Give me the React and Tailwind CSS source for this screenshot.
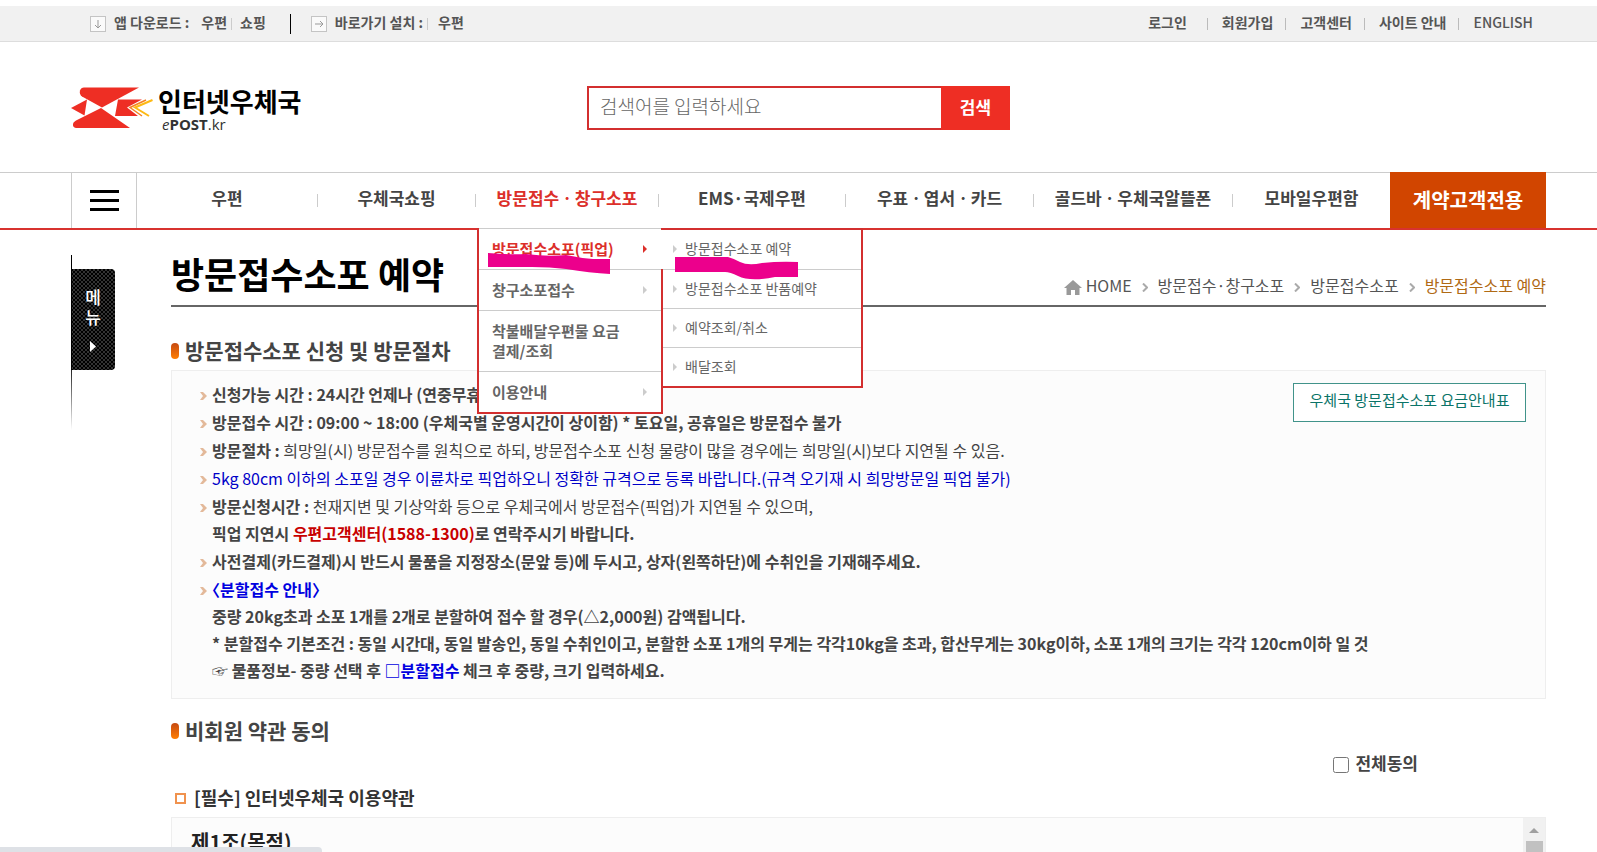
import React from 'react'
import clsx from 'clsx'

const quickLinks = ['로그인', '회원가입', '고객센터', '사이트 안내', 'ENGLISH']

const navItems = [
  { label: '우편' },
  { label: '우체국쇼핑' },
  { label: '방문접수ㆍ창구소포', active: true },
  { label: 'EMS·국제우편' },
  { label: '우표ㆍ엽서ㆍ카드' },
  { label: '골드바ㆍ우체국알뜰폰' },
  { label: '모바일우편함' },
]

const subMenu = [
  { label: '방문접수소포(픽업)', active: true, arrow: true },
  { label: '창구소포접수', arrow: true },
  { label: '착불배달우편물 요금 결제/조회' },
  { label: '이용안내', arrow: true },
]

const subMenu2 = ['방문접수소포 예약', '방문접수소포 반품예약', '예약조회/취소', '배달조회']

const crumbs = ['HOME', '방문접수·창구소포', '방문접수소포', '방문접수소포 예약']

function Triangle({ className }) {
  return (
    <svg viewBox="0 0 4 8" className={clsx('h-2 w-1 shrink-0', className)} fill="currentColor" aria-hidden="true">
      <path d="M0 0 4 4 0 8Z" />
    </svg>
  )
}

function ArrowBox({ right }) {
  return (
    <svg viewBox="0 0 16 16" className="mt-1 h-4 w-4" fill="none" aria-hidden="true">
      <rect x="0.5" y="0.5" width="15" height="15" fill="#fafafa" stroke="#c4c4c4" />
      <path d={right ? 'M4 8h8M9 5l3 3-3 3' : 'M8 4v8M5 9l3 3 3-3'} stroke="#999" />
    </svg>
  )
}

function TopBar() {
  return (
    <div className="mt-1.5 flex h-9 items-center justify-between border-b border-[#ddd] bg-[#f1f1f1] pb-1 pl-[90px] pr-16 text-sm font-bold text-[#555]">
      <div className="flex items-center">
        <ArrowBox />
        <span className="ml-2">앱 다운로드 :</span>
        <a href="#" className="ml-3">우편</a>
        <span className="mx-1 mt-1 h-3 w-px bg-[#ccc]" />
        <a href="#" className="ml-1">쇼핑</a>
        <span className="ml-6 mr-5 mt-1 h-5 w-px bg-black" />
        <ArrowBox right />
        <span className="ml-2">바로가기 설치 :</span>
        <span className="ml-1 mt-1 h-3 w-px bg-[#ccc]" />
        <a href="#" className="ml-2.5">우편</a>
      </div>
      <ul className="flex items-center">
        {quickLinks.map((label, i) => (
          <li key={label} className="flex items-center">
            {i > 0 && <span className={clsx('mr-3.5 mt-1 h-3 w-px bg-[#bbb]', i === 1 ? 'ml-5' : 'ml-3')} />}
            <a href="#" className={clsx(i === 4 && 'font-medium')}>{label}</a>
          </li>
        ))}
      </ul>
    </div>
  )
}

function Logo() {
  return (
    <a href="#" className="flex w-[516px] items-center gap-1">
      <svg viewBox="0 0 83 42" className="h-[42px] w-[83px]" aria-hidden="true">
        <g fill="#ee2e24">
          <path d="M13 0.500H68L31 20.500 11 9.500Q8 7 9 3.500 10 0.500 13 0.500Z" />
          <path d="M30 21 59 41H5Q1.500 40.500 2 37 2 35 5 33.500Z" />
          <path d="M0 21 16 12.500 13.500 28.500Z" />
          <path d="M47 12.500H71L56 20.500 67 29H44Z" />
        </g>
        <path d="M75 13 59 20.500 71 29" fill="none" stroke="#f58220" strokeWidth="1.500" />
        <path d="M81.500 13 64 20.500 78 29" fill="none" stroke="#fdb913" strokeWidth="2" />
      </svg>
      <span className="flex flex-col">
        <span className="text-[26px] font-bold leading-8 text-black">인터넷우체국</span>
        <span className="pl-1 font-['Open_Sans','Noto_Sans',sans-serif] text-[15px] leading-[14px] text-[#333]">
          <i>e</i><b>POST</b>.kr
        </span>
      </span>
    </a>
  )
}

function Header() {
  return (
    <header className="flex h-[130px] items-center pl-[71px] pt-0.5">
      <Logo />
      <form className="flex h-11 w-[423px]">
        <input
          type="text"
          aria-label="검색어"
          placeholder="검색어를 입력하세요"
          className="min-w-0 flex-1 border-2 border-r-0 border-[#d32f2f] px-[11px] pb-1 text-[19px] font-light outline-none placeholder:text-[#666]"
        />
        <button type="button" className="w-[69px] bg-[#ee2e24] pb-0.5 text-[17px] font-bold text-white">검색</button>
      </form>
    </header>
  )
}

function DropDown() {
  return (
    <div className="absolute left-px top-[55px] z-10 flex items-start">
      <ul className="w-[186px] border-2 border-t-0 border-[#d32f2f] bg-white text-[15px] font-bold leading-5 text-[#666]">
        {subMenu.map((item) => (
          <li key={item.label} className="border-t border-[#ccc]">
            <a
              href="#"
              className={clsx(
                'flex items-center justify-between py-2.5 pl-[13px] pr-3.5',
                item.active && 'text-[#dc2f2a]'
              )}
            >
              <span className="w-[140px]">{item.label}</span>
              {item.arrow && <Triangle className={item.active ? 'text-[#dc2f2a]' : 'text-[#ccc]'} />}
            </a>
          </li>
        ))}
      </ul>
      <ul className="-ml-0.5 w-[202px] border-2 border-l-0 border-[#d32f2f] text-sm leading-[19px] text-[#666]">
        {subMenu2.map((label, i) => (
          <li key={label} className={clsx('border-[#ccc] bg-white', i > 0 && 'ml-0.5 border-t')}>
            <a href="#" className={clsx('flex items-center gap-2 pt-[9px]', i > 0 ? 'pb-2.5 pl-2.5' : 'pb-[11px] pl-3')}>
              <Triangle className="text-[#ccc]" />
              {label}
            </a>
          </li>
        ))}
      </ul>

      {/* highlighter strokes over the two chosen entries */}
      <svg viewBox="0 0 420 210" className="pointer-events-none absolute -left-[17px] -top-2 h-[210px] w-[420px]" fill="#ec008c" aria-hidden="true">
        <path d="M28 33Q50 35 66 34 88 37 106 35 120 38 133 39H150V54Q130 53 106 49 90 47 72 47H28Z" />
        <path d="M215 37H268Q275 39 280 42 288 46 302 43 320 41 338 42V57H315Q290 62 278 56 270 52 265 52H215Z" />
      </svg>
    </div>
  )
}

function Nav() {
  return (
    <nav className="relative z-10 flex h-[58px] border-b-2 border-t border-b-[#d8322f] border-t-[#ccc] pl-[71px] pr-[51px]">
      <button type="button" aria-label="전체메뉴" className="flex w-[66px] shrink-0 flex-col items-center justify-center gap-1.5 border-x border-[#ccc]">
        <span className="h-[3px] w-[29px] bg-black" />
        <span className="h-[3px] w-[29px] bg-black" />
        <span className="h-[3px] w-[29px] bg-black" />
      </button>
      <ul className="grid flex-1 grid-cols-[181fr_158fr_183fr_187fr_188fr_199fr_157fr] items-center">
        {navItems.map((item, i) => (
          <li key={item.label} className="relative flex h-full items-center">
            <a
              href="#"
              className={clsx(
                'flex-1 whitespace-nowrap pb-1.5 text-center text-[17px] font-bold',
                item.active ? 'text-[#dc2f2a]' : 'text-[#444]'
              )}
            >
              {item.label}
            </a>
            {i < navItems.length - 1 && <span className="h-[13px] w-px bg-[#ccc]" />}
            {item.active && <DropDown />}
          </li>
        ))}
      </ul>
      <a href="#" className="-mt-px flex w-[156px] shrink-0 items-center justify-center bg-[#d14500] text-xl font-bold text-white">
        계약고객전용
      </a>
    </nav>
  )
}

function SideMenu() {
  return (
    <aside className="w-[171px] shrink-0 pl-[71px] pt-[25px]">
      <div className="relative h-[175px] pt-3.5">
        <span className="absolute left-0 top-0 h-full w-px bg-linear-to-b from-black from-60% to-transparent" />
        <button
          type="button"
          className="flex h-[101px] w-11 flex-col items-center justify-center rounded-r bg-[#111] bg-[conic-gradient(#333_25%,#000_0_50%,#333_0_75%,#000_0)] bg-[length:4px_4px] text-[17px] font-medium leading-5 text-white"
        >
          <span>메</span>
          <span>뉴</span>
          <svg viewBox="0 0 6 11" className="mt-3.5 h-[11px] w-1.5" fill="currentColor" aria-hidden="true">
            <path d="M0 0 6 5.500 0 11Z" />
          </svg>
        </button>
      </div>
    </aside>
  )
}

function PageTitle() {
  return (
    <div className="flex h-[77px] items-end justify-between border-b-2 border-[#666]">
      <h1 className="pb-3 text-4xl font-bold text-black">방문접수소포 예약</h1>
      <ol className="flex items-center pb-2 text-base leading-6 text-[#555]">
        {crumbs.map((label, i) => (
          <li key={label} className={clsx('flex items-center', i === 3 && 'text-[#b06a14]')}>
            {i === 0 ? (
              <svg viewBox="0 0 18 15" className="mr-1 mt-1 h-[15px] w-[18px]" fill="#999" aria-hidden="true">
                <path d="M9 0 18 8H15.500V15H11V10H7V15H2.500V8H0Z" />
              </svg>
            ) : (
              <svg viewBox="0 0 6 9" className="mx-2.5 mt-1 h-[9px] w-1.5" fill="none" stroke="#aaa" strokeWidth="2" aria-hidden="true">
                <path d="M1 0.500 5 4.500 1 8.500" />
              </svg>
            )}
            <a href="#">{label}</a>
          </li>
        ))}
      </ol>
    </div>
  )
}

function SectionTitle({ children }) {
  return (
    <h2 className="flex items-center gap-1.5 text-[21px] font-bold leading-8 text-[#444]">
      <span className="mt-0.5 h-4 w-2 rounded bg-linear-to-b from-[#c64a10] to-[#ff7e00]" />
      {children}
    </h2>
  )
}

function Item({ children }) {
  return (
    <li className="flex gap-[5px]">
      <svg viewBox="0 0 7 8" className="mt-[11px] h-2 w-[7px] shrink-0" fill="#e3b99a" aria-hidden="true">
        <path d="M0 0H3L7 4 3 8H0L3 4Z" />
      </svg>
      <div>{children}</div>
    </li>
  )
}

function Guide() {
  return (
    <div className="relative border border-[#eee] bg-[#fcfcfc] pb-3.5 pl-7 pt-2.5">
      <a
        href="#"
        className="absolute right-[19px] top-3 flex h-[39px] w-[233px] items-center justify-center border border-[#41938a] bg-white pb-1 text-[15px] text-[#0b7468]"
      >
        우체국 방문접수소포 요금안내표
      </a>
      <ul className="flex flex-col gap-px text-base font-bold leading-[27px] text-[#444]">
        <Item>신청가능 시간 : 24시간 언제나 (연중무휴)</Item>
        <Item>방문접수 시간 : 09:00 ~ 18:00 (우체국별 운영시간이 상이함) * 토요일, 공휴일은 방문접수 불가</Item>
        <Item>
          방문절차 : <span className="font-normal">희망일(시) 방문접수를 원칙으로 하되, 방문접수소포 신청 물량이 많을 경우에는 희망일(시)보다 지연될 수 있음.</span>
        </Item>
        <Item>
          <span className="font-normal text-[#0000c8]">5kg 80cm 이하의 소포일 경우 이륜차로 픽업하오니 정확한 규격으로 등록 바랍니다.(규격 오기재 시 희망방문일 픽업 불가)</span>
        </Item>
        <Item>
          방문신청시간 : <span className="font-normal">천재지변 및 기상악화 등으로 우체국에서 방문접수(픽업)가 지연될 수 있으며,</span>
          <br />
          픽업 지연시 <span className="text-[#c80000]">우편고객센터(1588-1300)</span>로 연락주시기 바랍니다.
        </Item>
        <Item>사전결제(카드결제)시 반드시 물품을 지정장소(문앞 등)에 두시고, 상자(왼쪽하단)에 수취인을 기재해주세요.</Item>
        <Item>
          <span className="text-[#0000e0] [font-feature-settings:'halt']">〈분할접수 안내〉</span>
          <br />
          중량 20kg초과 소포 1개를 2개로 분할하여 접수 할 경우(△2,000원) 감액됩니다.
          <br />
          * 분할접수 기본조건 : 동일 시간대, 동일 발송인, 동일 수취인이고, 분할한 소포 1개의 무게는 각각10kg을 초과, 합산무게는 30kg이하, 소포 1개의 크기는 각각 120cm이하 일 것
          <br />
          ☞ 물품정보- 중량 선택 후 <span className="text-[#0000e0]">□분할접수</span> 체크 후 중량, 크기 입력하세요.
        </Item>
      </ul>
    </div>
  )
}

function Terms() {
  return (
    <section className="mt-[15px]">
      <SectionTitle>비회원 약관 동의</SectionTitle>
      <label className="ml-auto mr-32 mt-[3px] flex w-fit items-center gap-1.5 text-[17px] font-bold leading-7 text-[#444]">
        <input type="checkbox" className="mt-1 h-4 w-4" />
        전체동의
      </label>
      <h3 className="mt-1.5 flex items-center gap-2 pl-1 text-lg font-bold leading-7 text-[#333]">
        <span className="mt-0.5 h-[11px] w-[11px] border-2 border-[#f0924e] bg-white" />
        [필수] 인터넷우체국 이용약관
      </h3>
      <div className="mt-1.5 flex h-40 justify-between border border-[#eee] bg-[#fcfcfc]">
        <p className="pl-[19px] pt-2 text-xl font-bold leading-8 text-[#222]">제1조(목적)</p>
        <div className="flex w-[22px] flex-col items-center bg-[#f1f1f1] pt-2.5">
          <svg viewBox="0 0 10 5" className="mb-2 h-[5px] w-2.5" fill="#a0a0a0" aria-hidden="true">
            <path d="M5 0 10 5H0Z" />
          </svg>
          <span className="w-[17px] flex-1 bg-[#c1c1c1]" />
        </div>
      </div>
    </section>
  )
}

export default function App() {
  return (
    <div className="flex h-screen flex-col overflow-hidden bg-white font-['Noto_Sans_CJK_KR',sans-serif]">
      <div className="shrink-0">
        <TopBar />
        <Header />
        <Nav />
        <div className="flex">
          <SideMenu />
          <main className="min-w-0 flex-1 pr-[51px]">
            <PageTitle />
            <section className="pt-[27px]">
              <SectionTitle>방문접수소포 신청 및 방문절차</SectionTitle>
              <div className="pt-1">
                <Guide />
              </div>
            </section>
            <Terms />
          </main>
        </div>
      </div>
      <div className="fixed bottom-0 left-0 z-20 h-[5px] w-[322px] rounded-tr bg-[#dee1e6]" />
    </div>
  )
}
